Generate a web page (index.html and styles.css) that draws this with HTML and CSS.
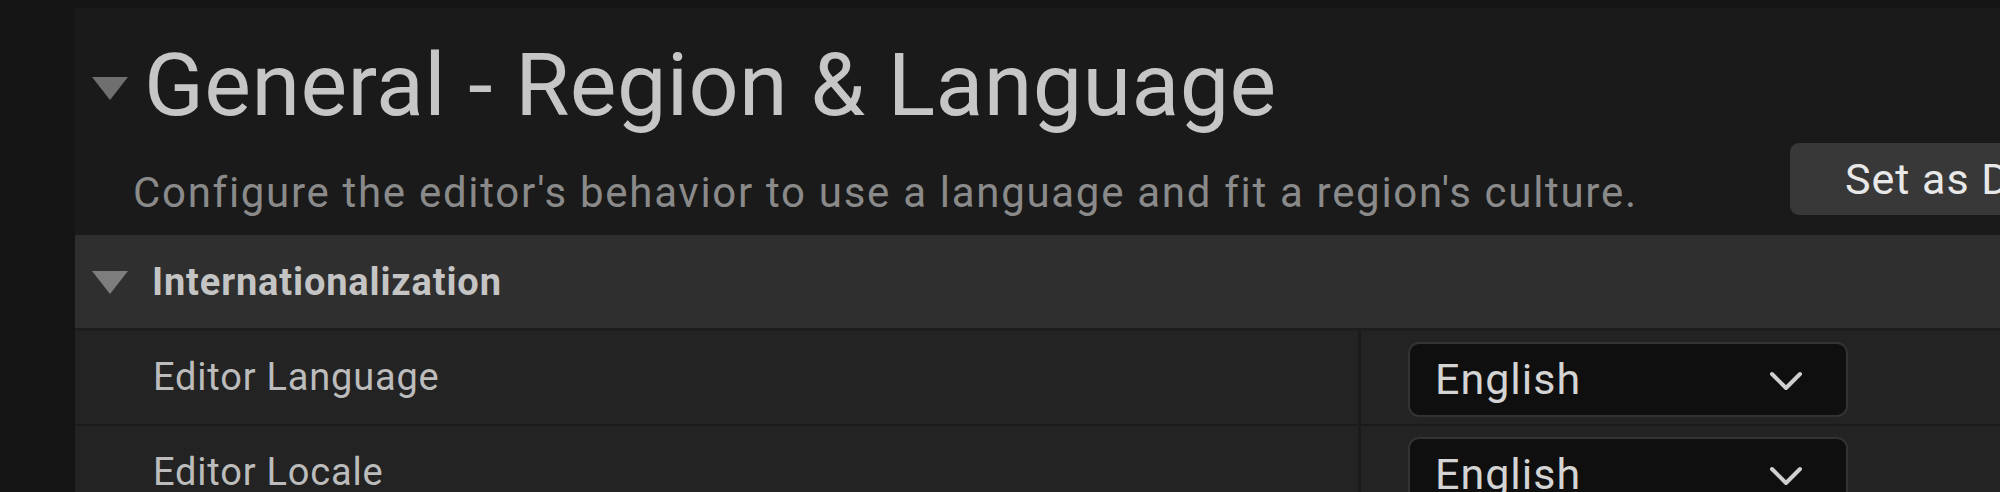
FILE: index.html
```html
<!DOCTYPE html>
<html lang="en">
<head>
<meta charset="utf-8">
<title>General - Region &amp; Language</title>
<link rel="stylesheet" href="styles.css">
</head>
<body>
<main class="panel">
  <section class="hero">
    <div class="title-row">
      <span class="tri tri-title"></span>
      <h1 class="title">General - Region &amp; Language</h1>
    </div>
    <div class="desc-row">
      <p class="desc">Configure the editor's behavior to use a language and fit a region's culture.</p>
      <button class="btn">Set as Default</button>
    </div>
  </section>
  <section class="category">
    <div class="cat-head">
      <span class="tri tri-cat"></span>
      <span class="cat-title">Internationalization</span>
    </div>
    <div class="prop-row">
      <div class="prop-name">Editor Language</div>
      <div class="prop-value">
        <div class="combo">
          <span class="combo-text">English</span>
          <svg class="chev" width="34" height="20" viewBox="0 0 34 20"><polyline points="3,3 17,17 31,3" fill="none" stroke="#cfcfcf" stroke-width="4" stroke-linecap="round" stroke-linejoin="round"/></svg>
        </div>
      </div>
    </div>
    <div class="prop-row">
      <div class="prop-name">Editor Locale</div>
      <div class="prop-value">
        <div class="combo">
          <span class="combo-text">English</span>
          <svg class="chev" width="34" height="20" viewBox="0 0 34 20"><polyline points="3,3 17,17 31,3" fill="none" stroke="#cfcfcf" stroke-width="4" stroke-linecap="round" stroke-linejoin="round"/></svg>
        </div>
      </div>
    </div>
  </section>
</main>
</body>
</html>
```
FILE: styles.css
```css
html, body {
  margin: 0;
  padding: 0;
  width: 2000px;
  height: 492px;
  overflow: hidden;
  background: #151515;
  font-family: Roboto, "Liberation Sans", sans-serif;
}

.panel {
  margin: 8px 0 0 75px;
  background: #1a1a1a;
  height: 484px;
  overflow: hidden;
}

.hero {
  padding: 27px 0 20px 0;
  height: 180px;
}

.title-row {
  display: flex;
  align-items: center;
  padding-left: 17px;
  height: 100px;
}

.tri {
  display: block;
  width: 0;
  height: 0;
  border-left: 18px solid transparent;
  border-right: 18px solid transparent;
  border-top: 23px solid #6f6f6f;
  flex: none;
}

.tri-title {
  margin-top: 6px;
  margin-right: 16px;
}

.title {
  margin: 0;
  font-size: 88px;
  line-height: 100px;
  font-weight: 400;
  letter-spacing: 0.4px;
  color: #c6c6c6;
  white-space: nowrap;
}

.desc-row {
  display: grid;
  grid-template-columns: 1657px max-content;
  align-items: end;
  margin-top: 8px;
  padding-left: 58px;
}

.desc {
  margin: 0;
  font-size: 42px;
  line-height: 44px;
  letter-spacing: 1.7px;
  color: #8a8a8a;
  white-space: nowrap;
}

.btn {
  height: 72px;
  padding: 0 55px;
  border: none;
  border-radius: 9px;
  background: #383838;
  color: #e8e8e8;
  font-family: Roboto, "Liberation Sans", sans-serif;
  font-size: 43px;
  line-height: 72px;
  letter-spacing: 1px;
  white-space: nowrap;
}

.category {
  display: flex;
  flex-direction: column;
}

.cat-head {
  display: flex;
  align-items: center;
  box-sizing: border-box;
  height: 96px;
  padding-left: 17px;
  background: #2f2f2f;
  border-bottom: 3px solid #1d1d1d;
}

.tri-cat {
  border-top-color: #7d7d7d;
  margin-right: 24px;
  margin-top: 2px;
}

.cat-title {
  font-size: 38px;
  font-weight: 700;
  letter-spacing: 0.85px;
  color: #c4c4c4;
  line-height: 44px;
}

.prop-row {
  display: grid;
  grid-template-columns: 1283px 3px 1fr;
  height: 93px;
  border-bottom: 2px solid #1b1b1b;
  background: #232323;
}

.prop-row::before {
  content: "";
  grid-column: 2;
  grid-row: 1;
  background: #1b1b1b;
}

.prop-name {
  grid-column: 1;
  grid-row: 1;
  padding-left: 78px;
  font-size: 38px;
  line-height: 93px;
  letter-spacing: 0.8px;
  color: #bcbcbc;
}

.prop-value {
  grid-column: 3;
  grid-row: 1;
  padding: 11px 0 0 47px;
}

.combo {
  display: flex;
  align-items: center;
  justify-content: space-between;
  box-sizing: border-box;
  width: 440px;
  height: 75px;
  padding: 0 43px 0 25px;
  background: #0f0f0f;
  border: 2px solid #333333;
  border-radius: 11px;
}

.combo-text {
  font-size: 43px;
  line-height: 71px;
  letter-spacing: 1px;
  color: #d4d4d4;
}

.chev {
  display: block;
  margin-top: 2px;
}
```
